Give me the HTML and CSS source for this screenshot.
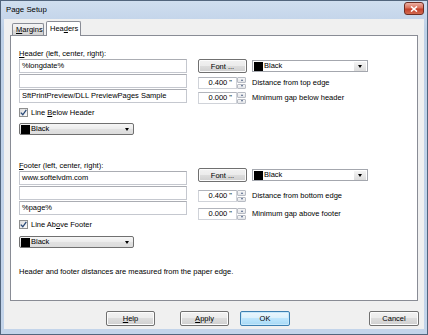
FILE: index.html
```html
<!doctype html>
<html lang="en">
  <head>
    <meta charset="UTF-8" />
    <title>Page Setup</title>
    <link rel="stylesheet" href="styles.css">
  </head>
  <body>
    <div class="window">
      <div class="titlebar">
        <span class="title">Page Setup</span>
        <span class="close">
          <svg width="8" height="6" viewBox="0 0 8 6"><path d="M1 0.5 L7 5.5 M7 0.5 L1 5.5" stroke="#fff" stroke-width="1.6"/></svg>
        </span>
      </div>

      <div class="client">
        <div class="tabs">
          <div class="tab"><u>M</u>argins</div>
          <div class="tab active">Hea<u>d</u>ers</div>
        </div>

        <div class="panel">
          <!-- header -->
          <div class="section">
            <div class="caption"><u>H</u>eader (left, center, right):</div>
            <div class="cols">
              <div class="left">
                <div class="edit">%longdate%</div>
                <div class="edit"></div>
                <div class="edit">SftPrintPreview/DLL PreviewPages Sample</div>
                <div class="check">
                  <span class="box"><svg width="7" height="7" viewBox="0 0 7 7"><path d="M0.8 3.6 L2.8 5.8 L6.3 0.8" fill="none" stroke="#2a4a78" stroke-width="1.3"/></svg></span>
                  <span>Line <u>B</u>elow Header</span>
                </div>
                <div class="combo">
                  <span class="swatch"></span><span class="combo-text">Black</span>
                  <span class="arrow"></span>
                </div>
              </div>
              <div class="right">
                <div class="font-row">
                  <button class="btn font-btn">Font ...</button>
                  <div class="color-combo">
                    <span class="swatch"></span><span class="combo-text">Black</span>
                    <span class="drop"><span class="arrow"></span></span>
                  </div>
                </div>
                <div class="spin-row first">
                  <div class="spin-edit">0.400 "</div>
                  <div class="updown"><span class="up"></span><span class="down"></span></div>
                  <span class="spin-label">Distance from top edge</span>
                </div>
                <div class="spin-row second">
                  <div class="spin-edit">0.000 "</div>
                  <div class="updown"><span class="up"></span><span class="down"></span></div>
                  <span class="spin-label">Minimum gap below header</span>
                </div>
              </div>
            </div>
          </div>

          <!-- footer -->
          <div class="section footer">
            <div class="caption"><u>F</u>ooter (left, center, right):</div>
            <div class="cols">
              <div class="left">
                <div class="edit">www.softelvdm.com</div>
                <div class="edit"></div>
                <div class="edit">%page%</div>
                <div class="check">
                  <span class="box"><svg width="7" height="7" viewBox="0 0 7 7"><path d="M0.8 3.6 L2.8 5.8 L6.3 0.8" fill="none" stroke="#2a4a78" stroke-width="1.3"/></svg></span>
                  <span>Line Ab<u>o</u>ve Footer</span>
                </div>
                <div class="combo">
                  <span class="swatch"></span><span class="combo-text">Black</span>
                  <span class="arrow"></span>
                </div>
              </div>
              <div class="right">
                <div class="font-row">
                  <button class="btn font-btn">Font ...</button>
                  <div class="color-combo">
                    <span class="swatch"></span><span class="combo-text">Black</span>
                    <span class="drop"><span class="arrow"></span></span>
                  </div>
                </div>
                <div class="spin-row first">
                  <div class="spin-edit">0.400 "</div>
                  <div class="updown"><span class="up"></span><span class="down"></span></div>
                  <span class="spin-label">Distance from bottom edge</span>
                </div>
                <div class="spin-row second">
                  <div class="spin-edit">0.000 "</div>
                  <div class="updown"><span class="up"></span><span class="down"></span></div>
                  <span class="spin-label">Minimum gap above footer</span>
                </div>
              </div>
            </div>
          </div>

          <p class="note">Header and footer distances are measured from the paper edge.</p>
        </div>

        <div class="buttons">
          <button class="btn help"><u>H</u>elp</button>
          <button class="btn apply"><u>A</u>pply</button>
          <button class="btn ok">OK</button>
          <button class="btn cancel">Cancel</button>
        </div>
      </div>
    </div>
  </body>
</html>
```

FILE: styles.css
```css
* {
  box-sizing: border-box;
}
body {
  margin: 0;
  font-family: "Liberation Sans", Arial, sans-serif;
  font-size: 7.5px;
  color: #000;
}
u {
  text-decoration: underline;
  text-underline-offset: 1px;
}

/* window frame */
.window {
  width: 428px;
  height: 335px;
  border: 1px solid #52657d;
  background: linear-gradient(#d0deef, #bdd0e7 30px, #c3d4ea);
  padding: 0 3px 5px;
  display: flex;
  flex-direction: column;
}
.titlebar {
  height: 18px;
  display: flex;
  align-items: center;
  justify-content: space-between;
}
.title {
  padding-left: 2px;
  font-size: 7.8px;
  margin-top: -1px;
}
.close {
  width: 20px;
  height: 13px;
  margin-top: -3px;
  border: 1px solid #6e2e24;
  border-radius: 3px;
  background: linear-gradient(#eeb1a4, #d9705b 45%, #c4402a 55%, #d26a50);
  display: flex;
  align-items: center;
  justify-content: center;
}
.client {
  flex: 1;
  background: #f0f0f0;
  padding: 2px 5px 0 6px;
  display: flex;
  flex-direction: column;
}

/* tabs */
.tabs {
  display: flex;
  align-items: flex-end;
  height: 15px;
  padding-left: 2px;
}
.tab {
  height: 13px;
  padding: 0 3px;
  border: 1px solid #898c95;
  border-bottom: none;
  border-radius: 2px 2px 0 0;
  background: linear-gradient(#f3f3f3, #ebebeb 50%, #dddddd 50%, #cfcfcf);
  line-height: 11px;
  width: 32px;
  text-align: center;
}
.tab.active {
  height: 15px;
  width: 35px;
  margin-left: 2px;
  background: #fff;
  line-height: 13px;
  position: relative;
  z-index: 1;
}
.panel {
  margin-top: -1px;
  width: 408px;
  height: 266px;
  border: 1px solid #898c95;
  background: #fff;
  padding: 12px 0 0 8px;
}

/* sections */
.caption {
  line-height: 11px;
}
.footer {
  margin-top: 25px;
}
.cols {
  display: flex;
  gap: 11px;
}
.left {
  width: 168px;
}
.edit {
  height: 14px;
  margin-bottom: 1px;
  border: 1px solid #c5c8cf;
  border-top-color: #abadb3;
  padding-left: 2px;
  line-height: 12px;
  white-space: nowrap;
}
.check {
  margin-top: 4px;
  height: 11px;
  display: flex;
  align-items: center;
  gap: 3px;
}
.box {
  width: 9px;
  height: 9px;
  border: 1px solid #8e8f8f;
  background: linear-gradient(135deg, #dcdcdc, #fbfbfb);
  display: flex;
  align-items: center;
  justify-content: center;
}
.combo {
  margin-top: 5px;
  width: 115px;
  height: 12px;
  border: 1px solid #707070;
  border-radius: 2px;
  background: linear-gradient(#f6f6f6, #ececec 50%, #e2e2e2 50%, #dcdcdc);
  display: flex;
  align-items: center;
  padding-left: 1px;
}
.footer .combo {
  margin-top: 6px;
}
.swatch {
  width: 9px;
  height: 9px;
  background: #000;
  margin-right: 1px;
}
.combo-text {
  flex: 1;
  line-height: 10px;
}
.arrow {
  width: 0;
  height: 0;
  border-left: 2.5px solid transparent;
  border-right: 2.5px solid transparent;
  border-top: 3px solid #000;
  margin-right: 4px;
}

/* right column */
.footer .right {
  margin-top: -3px;
}
.font-row {
  display: flex;
  gap: 5px;
  height: 14px;
}
.btn {
  font: inherit;
  color: #000;
  padding: 0;
  border: 1px solid #707070;
  border-radius: 2px;
  background: linear-gradient(#f2f2f2, #ebebeb 50%, #dddddd 50%, #cfcfcf);
  box-shadow: inset 0 0 0 1px #fcfcfc;
}
.font-btn {
  width: 49px;
  height: 14px;
}
.color-combo {
  width: 116px;
  height: 12px;
  margin-top: 1px;
  border: 1px solid #a4a7ae;
  background: #fff;
  display: flex;
  align-items: center;
  padding-left: 1px;
}
.drop {
  width: 12px;
  height: 9px;
  margin-right: 1px;
  background: linear-gradient(#f4f4f4, #dcdcdc);
  display: flex;
  align-items: center;
  justify-content: center;
}
.drop .arrow {
  margin-right: 0;
}
.spin-row {
  display: flex;
  align-items: center;
  height: 12px;
}
.spin-row.first {
  margin-top: 4px;
}
.spin-row.second {
  margin-top: 3px;
}
.footer .spin-row.first {
  margin-top: 8px;
}
.footer .spin-row.second {
  margin-top: 6px;
}
.spin-edit {
  width: 39px;
  height: 12px;
  border: 1px solid #d0d3d9;
  border-top-color: #b2b5bc;
  text-align: right;
  padding-right: 4px;
  line-height: 10px;
}
.updown {
  width: 9px;
  height: 12px;
  display: flex;
  flex-direction: column;
  gap: 1px;
  margin-right: 6px;
}
.updown span {
  flex: 1;
  border: 1px solid #b8bcc4;
  border-radius: 1px;
  background: linear-gradient(#f7f7f7, #e2e4e8);
  display: flex;
  align-items: center;
  justify-content: center;
}
.updown .up::after,
.updown .down::after {
  content: "";
  border-left: 1.5px solid transparent;
  border-right: 1.5px solid transparent;
}
.updown .up::after {
  border-bottom: 2px solid #4d6185;
}
.updown .down::after {
  border-top: 2px solid #4d6185;
}
.spin-label {
  line-height: 10px;
}

.note {
  margin: 18px 0 0;
  line-height: 11px;
}

/* bottom buttons */
.buttons {
  display: flex;
  margin-top: 10px;
  height: 15px;
}
.buttons .btn {
  height: 15px;
  width: 49px;
}
.help {
  margin-left: 96px;
}
.apply {
  margin-left: 25px;
}
.ok {
  margin-left: 11px;
  width: 50px !important;
  border-color: #3c7fb1;
  background: linear-gradient(#eaf6fd, #d9f0fc 50%, #bee6fd 50%, #a7d9f5);
  box-shadow: inset 0 0 0 1px #c6e8fb;
}
.cancel {
  margin-left: auto;
  width: 50px !important;
}
```
